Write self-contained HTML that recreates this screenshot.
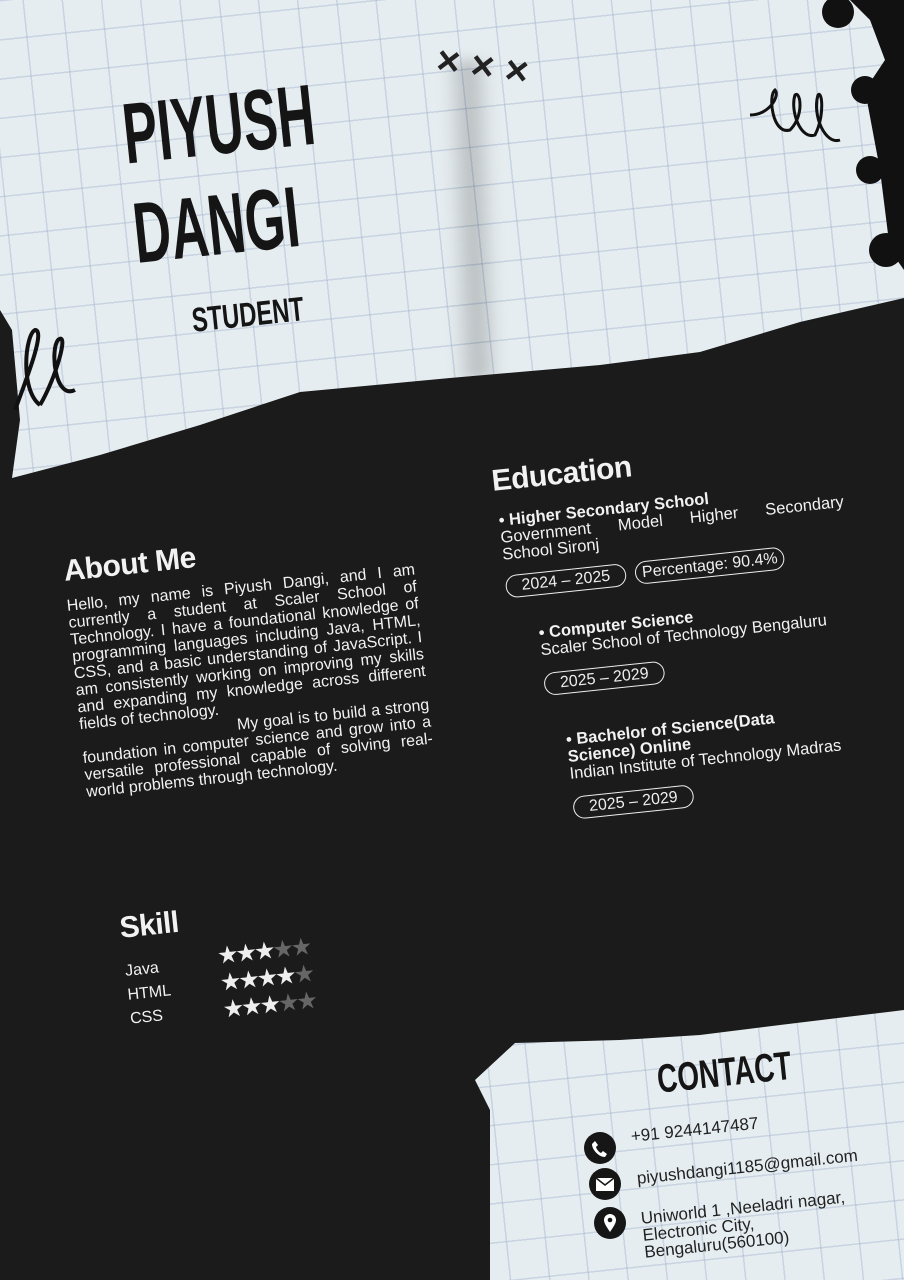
<!DOCTYPE html>
<html><head><meta charset="utf-8"><style>
html,body{margin:0;width:904px;height:1280px;overflow:hidden;}
body{position:relative;font-family:"Liberation Sans",sans-serif;}
#wrap{position:absolute;left:0;top:0;width:904px;height:1280px;overflow:hidden;
background-color:#e6edf0;
background-image:repeating-linear-gradient(174deg,rgba(150,170,200,.38) 0 1.5px,transparent 1.5px 39px),repeating-linear-gradient(84deg,rgba(150,170,200,.38) 0 1.5px,transparent 1.5px 39px);}
.black{position:absolute;left:0;top:0;width:904px;height:1280px;background:#1b1b1b;clip-path:polygon(0 310px,12px 330px,20px 420px,12px 478px,100px 455px,200px 425px,300px 392px,450px 378px,600px 365px,700px 352px,800px 322px,904px 298px,904px 1010px,780px 1025px,700px 1035px,620px 1040px,515px 1043px,475px 1080px,490px 1110px,490px 1280px,0 1280px);}
.r{position:absolute;transform:rotate(-6deg);transform-origin:left top;}
.w{color:#f2f2f2}
.h{font-weight:bold;font-size:30px;color:#f2f2f2;letter-spacing:-0.5px}
.hand{font-family:"Liberation Sans Narrow","Liberation Sans",sans-serif;font-weight:bold;color:#151515;transform:rotate(-6deg) scaleX(.7);transform-origin:left top;position:absolute;white-space:nowrap}
.pill{display:inline-block;border:1.5px solid #eee;border-radius:16px;padding:2px 15px;font-size:16px;color:#eee}
.star{font-size:24px;letter-spacing:-3px}
.ic{position:absolute;width:32px;height:32px;border-radius:50%;background:#161616;}
.ct{position:absolute;font-size:17px;color:#222;transform:rotate(-6deg);transform-origin:left top;line-height:17px;white-space:nowrap}
</style></head><body><div id="wrap">
<div style="position:absolute;left:448px;top:60px;width:50px;height:320px;background:linear-gradient(90deg,transparent,rgba(0,0,0,.2),transparent);filter:blur(6px);transform:rotate(-2deg)"></div>
<div class="black"></div>
<div class="hand" style="left:118px;top:85px;font-size:86px;line-height:100px;transform:rotate(-6deg) scaleX(.6)">PIYUSH<br>DANGI</div>
<div class="hand" style="left:190px;top:302px;font-size:34px">STUDENT</div>
<div class="r" style="left:440px;top:38px;font-size:40px;font-weight:bold;color:#222;transform:rotate(8deg)">× × ×</div>
<svg style="position:absolute;left:0;top:310px" width="90" height="120"><path d="M15 100 C30 60 45 20 35 20 C25 25 20 80 40 95 M40 95 C55 70 70 20 58 30 C50 40 55 90 75 80" fill="none" stroke="#111" stroke-width="4"/></svg>
<svg style="position:absolute;left:750px;top:85px" width="110" height="80"><path d="M0 30 C20 30 30 10 25 5 C18 10 22 50 40 45 C55 30 50 5 45 10 C40 25 50 55 65 50 C75 30 72 5 68 10 C62 30 75 60 90 55" fill="none" stroke="#111" stroke-width="3"/></svg>
<svg style="position:absolute;left:810px;top:0" width="94" height="280"><circle cx="28" cy="12" r="16" fill="#111"/><circle cx="55" cy="90" r="14" fill="#111"/><circle cx="60" cy="170" r="14" fill="#111"/><circle cx="76" cy="250" r="17" fill="#111"/><path d="M40 0 L94 0 L94 270 L80 250 L70 170 L55 90 L75 60 L60 20Z" fill="#111"/></svg>

<div class="r h" style="left:62px;top:555px">About Me</div>
<div class="r w" style="left:66px;top:598px;width:350px;font-size:16px;line-height:17px;text-align:justify">Hello, my name is Piyush Dangi, and I am currently a student at Scaler School of Technology. I have a foundational knowledge of programming languages including Java, HTML, CSS, and a basic understanding of JavaScript. I am consistently working on improving my skills and expanding my knowledge across different fields of technology.<br>&nbsp;&nbsp;&nbsp;&nbsp;&nbsp;&nbsp;&nbsp;&nbsp;&nbsp;&nbsp;&nbsp;&nbsp;&nbsp;&nbsp;&nbsp;&nbsp;&nbsp;&nbsp;&nbsp;&nbsp;&nbsp;&nbsp;&nbsp;&nbsp;&nbsp;&nbsp;&nbsp;&nbsp;&nbsp;&nbsp;&nbsp;&nbsp;My goal is to build a strong foundation in computer science and grow into a versatile professional capable of solving real-world problems through technology.</div>

<div class="r h" style="left:490px;top:465px">Education</div>
<div class="r w" style="left:498px;top:513px;width:345px;font-size:16.5px;line-height:17px">
<b>• Higher Secondary School</b><br><div style="display:flex;justify-content:space-between;width:345px"><span>Government</span><span>Model</span><span>Higher</span><span>Secondary</span></div>School Sironj
<div style="margin-top:12px"><span class="pill">2024 – 2025</span> &nbsp;<span class="pill" style="padding:2px 6px">Percentage: 90.4%</span></div>
<div style="margin:30px 0 0 28px"><b>• Computer Science</b><br>Scaler School of Technology Bengaluru<div style="margin-top:14px"><span class="pill">2025 – 2029</span></div></div>
<div style="margin:38px 0 0 44px;width:300px"><b>• Bachelor of Science(Data<br>Science) Online</b><br>Indian Institute of Technology Madras<div style="margin-top:14px"><span class="pill">2025 – 2029</span></div></div>
</div>

<div class="r h" style="left:118px;top:912px">Skill</div>
<div class="r w" style="left:124px;top:960px;font-size:16px;line-height:24px">Java<br>HTML<br>CSS</div>
<div class="r" style="left:216px;top:945px;line-height:24px"><span class="star" style="color:#eee">★★★</span><span class="star" style="color:#666">★★</span><br><span class="star" style="color:#eee">★★★★</span><span class="star" style="color:#666">★</span><br><span class="star" style="color:#eee">★★★</span><span class="star" style="color:#666">★★</span></div>

<div class="hand" style="left:655px;top:1058px;font-size:40px">CONTACT</div>
<div class="ic" style="left:584px;top:1132px"><svg width="32" height="32"><path d="M11 9 L14 13 L12 15 C13 18 15 20 17 21 L19 19 L23 22 L21 25 C15 25 8 18 8 12Z" fill="#fff"/></svg></div>
<div class="ic" style="left:589px;top:1168px"><svg width="32" height="32"><rect x="7" y="10" width="18" height="13" fill="#fff"/><path d="M7 10 L16 17 L25 10" stroke="#161616" stroke-width="1.5" fill="none"/></svg></div>
<div class="ic" style="left:594px;top:1207px"><svg width="32" height="32"><path d="M16 25 C12 19 10 16 10 13 A6 6 0 0 1 22 13 C22 16 20 19 16 25Z" fill="#fff"/><circle cx="16" cy="13" r="2.3" fill="#161616"/></svg></div>
<div class="ct" style="left:630px;top:1128px">+91 9244147487</div>
<div class="ct" style="left:636px;top:1170px">piyushdangi1185@gmail.com</div>
<div class="ct" style="left:640px;top:1210px">Uniworld 1 ,Neeladri nagar,<br>Electronic City,<br>Bengaluru(560100)</div>
</div></body></html>
